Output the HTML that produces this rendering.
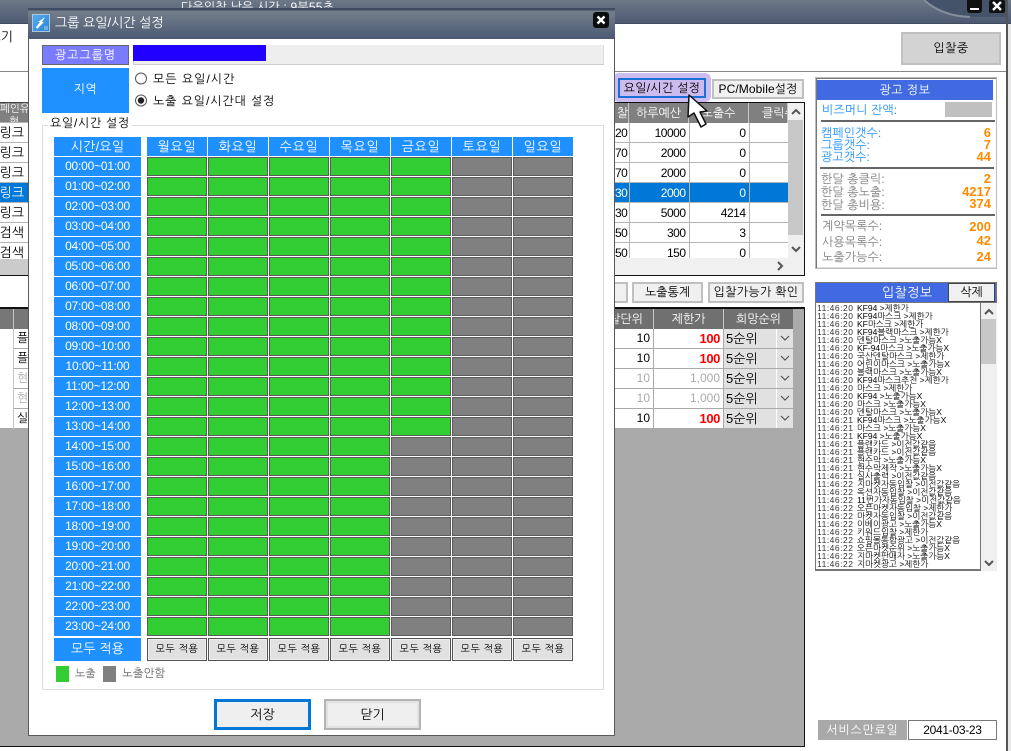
<!DOCTYPE html>
<html lang="ko">
<head>
<meta charset="utf-8">
<title>그룹 요일/시간 설정</title>
<style>
html,body{margin:0;padding:0;background:#fff}
body{position:relative;width:1011px;height:751px;overflow:hidden;font-family:"Liberation Sans","NanumGothic","Noto Sans CJK KR",sans-serif;font-size:12px;color:#000}
div,span,svg{box-sizing:border-box}
.a{position:absolute;white-space:nowrap}
.c{text-align:center}
.r{text-align:right}
.tm{left:54px;width:87px;height:19px;line-height:19px;background:#1e90ff;color:#fff;text-align:center;position:absolute;font-size:12px;letter-spacing:-.2px}
.day{top:137px;width:60px;height:19px;line-height:19px;background:#1e90ff;color:#fff;text-align:center;position:absolute;font-size:13px;letter-spacing:.7px}
.all{top:638px;width:60px;height:23px;line-height:21px;background:#e1e1e1;border:1px solid #555;box-shadow:inset 0 0 0 1px #eee;text-align:center;position:absolute;font-size:10px;letter-spacing:.5px}
.t td{padding:0 3px 0 0;text-align:right;border-right:1px solid #b4b4b4;border-bottom:1px solid #b4b4b4;height:19px;font-size:12px;letter-spacing:-.5px;overflow:hidden;white-space:nowrap}
.t{border-collapse:collapse;table-layout:fixed;position:absolute;background:#fff}
.hd{position:absolute;background:#808080;color:#fff;text-align:center;height:20px;line-height:20px;font-size:12px;border-right:1px solid #c8c8c8;overflow:hidden;white-space:nowrap}
.lnk{position:absolute;left:0;width:28px;height:19px;line-height:19px;background:#fff;font-size:13px;text-align:right;overflow:hidden;padding-right:4px;direction:rtl;white-space:nowrap}
.lab{position:absolute;white-space:nowrap;font-size:12px;letter-spacing:.1px}
.val{position:absolute;right:20px;color:#ff8c00;font-weight:bold;text-align:right;font-size:13px;white-space:nowrap}
.dv{position:absolute;background:#666;height:2px}
.dd{position:absolute;left:724px;width:69px;height:19px;background:#e1e1e1;font-size:13px;line-height:19px;padding-left:2px;overflow:hidden}
.dd i{position:absolute;left:52px;top:0;width:1px;height:19px;background:#fff}
.dd svg{position:absolute;left:56px;top:6px}
.log{position:absolute;left:817px;width:163px;height:8px;line-height:8px;font-size:8.5px;white-space:nowrap;overflow:hidden;color:#000}
.log b{font-weight:normal;display:inline-block;width:40px;letter-spacing:.5px;color:#333}
.btn{position:absolute;background:#f0f0f0;border:2px solid #c0c0c0;text-align:center;white-space:nowrap}
.big{color:#f00;font-weight:bold;font-size:13px;letter-spacing:-.4px}
</style>
</head>
<body>

<!-- main window title bar -->
<div class="a" style="left:0;top:0;width:1011px;height:24px;background:linear-gradient(#6d7887,#4c5a72);border-bottom:1px solid #3f4a5c"></div>
<svg class="a" style="left:900px;top:0" width="111" height="24"><path d="M24 0Q42 16 70 17L106 17L106 0Z" fill="#44526a"/><path d="M24 0Q42 16 70 17" fill="none" stroke="#858f9c" stroke-width="2"/></svg>
<div class="a" style="left:181px;top:0;color:#fff;font-size:12px;letter-spacing:.2px;line-height:14px">다음입찰 남은 시간 : 9분55초</div>
<div class="a" style="left:967px;top:0;width:15px;height:13px;background:#111;border-radius:0 0 3px 3px"><div class="a" style="left:3px;top:8px;width:9px;height:2px;background:#fff"></div></div>
<svg class="a" style="left:989px;top:0" width="16" height="13"><rect width="16" height="13" rx="2" fill="#111"/><path d="M4 2L12 10M12 2L4 10" stroke="#fff" stroke-width="2.4"/></svg>
<div class="a" style="left:1006px;top:0;width:2px;height:751px;background:#555"></div>
<div class="a" style="left:1008px;top:24px;width:3px;height:727px;background:#e8e8e8"></div>

<!-- toolbar -->
<div class="a" style="left:0;top:29px;font-size:13px;line-height:16px;width:13px;overflow:hidden;direction:rtl">보기</div>
<div class="a" style="left:0;top:71px;width:1006px;height:1px;background:#888"></div>
<div class="btn" style="left:901px;top:32px;width:100px;height:33px;background:#d3d3d3;line-height:29px;font-size:12px;letter-spacing:.5px">입찰중</div>

<!-- left upper table -->
<div class="a" style="left:0;top:102px;width:28px;height:21px;background:#808080;border-top:1px solid #444;color:#fff;font-size:10.5px;line-height:13px;overflow:hidden;text-align:center">페인유<br>형</div>
<div class="lnk" style="top:123px">파워링크</div>
<div class="lnk" style="top:143px">파워링크</div>
<div class="lnk" style="top:163px">파워링크</div>
<div class="lnk" style="top:183px;background:#0078d7;color:#fff">파워링크</div>
<div class="lnk" style="top:203px">파워링크</div>
<div class="lnk" style="top:223px">통합검색</div>
<div class="lnk" style="top:243px">통합검색</div>
<div class="a" style="left:0;top:122px;width:28px;height:137px;background:repeating-linear-gradient(#b4b4b4 0 1px,transparent 1px 20px)"></div>
<div class="a" style="left:0;top:259px;width:28px;height:16px;background:#cbcbcb"></div>
<div class="a" style="left:0;top:275px;width:28px;height:1px;background:#111"></div>

<!-- left lower table + background -->
<div class="a" style="left:0;top:307px;width:805px;height:440px;background:#aaa;border-top:2px solid #111;border-right:1px solid #111;border-bottom:1px solid #111"></div>
<div class="a" style="left:0;top:309px;width:28px;height:20px;background:#777"></div>
<div class="a" style="left:13px;top:309px;width:1px;height:120px;background:#c4c4c4"></div>
<div class="a" style="left:0;top:329px;width:13px;height:99px;background:#fff"></div>
<div class="a" style="left:14px;top:329px;width:14px;height:19px;background:#fff;line-height:19px;overflow:hidden;padding-left:3px">플</div>
<div class="a" style="left:14px;top:349px;width:14px;height:19px;background:#fff;line-height:19px;overflow:hidden;padding-left:3px">플</div>
<div class="a" style="left:14px;top:369px;width:14px;height:19px;background:#fff;line-height:19px;overflow:hidden;padding-left:3px;color:#aaa">현</div>
<div class="a" style="left:14px;top:389px;width:14px;height:19px;background:#fff;line-height:19px;overflow:hidden;padding-left:3px;color:#aaa">현</div>
<div class="a" style="left:14px;top:409px;width:14px;height:19px;background:#fff;line-height:19px;overflow:hidden;padding-left:3px">실</div>

<!-- right upper table -->
<div class="a" style="left:614px;top:102px;width:191px;height:174px;border:1px solid #111;background:#f0f0f0;overflow:hidden"></div>
<div class="hd" style="left:615px;top:103px;width:14px;text-align:left;padding-left:2px">찰</div>
<div class="hd" style="left:629px;top:103px;width:60px">하루예산</div>
<div class="hd" style="left:689px;top:103px;width:60px">노출수</div>
<div class="hd" style="left:749px;top:103px;width:39px;text-align:left;padding-left:13px">클릭수</div>
<div class="a" style="left:615px;top:123px;width:173px;height:135px;overflow:hidden;background:#fff">
<table class="t" style="left:0;top:0;width:173px">
<colgroup><col style="width:14px"><col style="width:60px"><col style="width:60px"><col style="width:39px"></colgroup>
<tr><td>20</td><td>10000</td><td>0</td><td></td></tr>
<tr><td>70</td><td>2000</td><td>0</td><td></td></tr>
<tr><td>70</td><td>2000</td><td>0</td><td></td></tr>
<tr style="background:#0078d7;color:#fff"><td>30</td><td>2000</td><td>0</td><td></td></tr>
<tr><td>30</td><td>5000</td><td>4214</td><td></td></tr>
<tr><td>50</td><td>300</td><td>3</td><td></td></tr>
<tr><td>50</td><td>150</td><td>0</td><td></td></tr>
</table>
</div>
<div class="a" style="left:788px;top:120px;width:15px;height:115px;background:#c8c8c8"></div>
<svg class="a" style="left:788px;top:103px" width="16" height="156"><path d="M4 11L8 7L12 11" fill="none" stroke="#555" stroke-width="2"/><path d="M4 144L8 148L12 144" fill="none" stroke="#555" stroke-width="2"/></svg>
<svg class="a" style="left:775px;top:260px" width="10" height="12"><path d="M3 2L7 6L3 10" fill="none" stroke="#555" stroke-width="2"/></svg>

<!-- middle buttons -->
<div class="btn" style="left:600px;top:282px;width:28px;height:21px"></div>
<div class="btn" style="left:632px;top:282px;width:71px;height:21px;line-height:17px">노출통계</div>
<div class="btn" style="left:708px;top:282px;width:96px;height:21px;line-height:17px;letter-spacing:.3px">입찰가능가 확인</div>

<!-- right lower table -->
<div class="hd" style="left:615px;top:309px;width:39px;background:#707070;text-align:right;padding-right:10px;direction:rtl">입찰단위</div>
<div class="hd" style="left:654px;top:309px;width:70px;background:#707070">제한가</div>
<div class="hd" style="left:724px;top:309px;width:69px;background:#707070;border-right:0">희망순위</div>

<div class="a r" style="left:615px;top:329px;width:38px;height:19px;background:#fff;line-height:19px;padding-right:3px">10</div>
<div class="a r big" style="left:654px;top:329px;width:69px;height:19px;background:#fff;line-height:19px;padding-right:3px">100</div>
<div class="dd" style="top:329px">5순위<i></i><svg width="10" height="7"><path d="M1 1L5 5L9 1" fill="none" stroke="#555" stroke-width="1.2"/></svg></div>

<div class="a r" style="left:615px;top:349px;width:38px;height:19px;background:#fff;line-height:19px;padding-right:3px">10</div>
<div class="a r big" style="left:654px;top:349px;width:69px;height:19px;background:#fff;line-height:19px;padding-right:3px">100</div>
<div class="dd" style="top:349px">5순위<i></i><svg width="10" height="7"><path d="M1 1L5 5L9 1" fill="none" stroke="#555" stroke-width="1.2"/></svg></div>

<div class="a r" style="left:615px;top:369px;width:38px;height:19px;background:#fff;line-height:19px;padding-right:3px;color:#aaa">10</div>
<div class="a r" style="left:654px;top:369px;width:69px;height:19px;background:#fff;line-height:19px;padding-right:3px;color:#aaa">1,000</div>
<div class="dd" style="top:369px">5순위<i></i><svg width="10" height="7"><path d="M1 1L5 5L9 1" fill="none" stroke="#555" stroke-width="1.2"/></svg></div>

<div class="a r" style="left:615px;top:389px;width:38px;height:19px;background:#fff;line-height:19px;padding-right:3px;color:#aaa">10</div>
<div class="a r" style="left:654px;top:389px;width:69px;height:19px;background:#fff;line-height:19px;padding-right:3px;color:#aaa">1,000</div>
<div class="dd" style="top:389px">5순위<i></i><svg width="10" height="7"><path d="M1 1L5 5L9 1" fill="none" stroke="#555" stroke-width="1.2"/></svg></div>

<div class="a r" style="left:615px;top:409px;width:38px;height:19px;background:#fff;line-height:19px;padding-right:3px">10</div>
<div class="a r big" style="left:654px;top:409px;width:69px;height:19px;background:#fff;line-height:19px;padding-right:3px">100</div>
<div class="dd" style="top:409px">5순위<i></i><svg width="10" height="7"><path d="M1 1L5 5L9 1" fill="none" stroke="#555" stroke-width="1.2"/></svg></div>

<!-- highlighted buttons -->
<div class="a" style="left:613px;top:73px;width:98px;height:29px;background:#cdbcf0;border-radius:6px"></div>
<div class="a c" style="left:618px;top:78px;width:88px;height:20px;background:#ccbbee;border:2px solid #1a6fd8;line-height:16px;font-size:12px;letter-spacing:.3px">요일/시간 설정</div>
<div class="btn" style="left:712px;top:79px;width:92px;height:20px;line-height:16px;letter-spacing:.1px">PC/Mobile설정</div>
<svg class="a" style="left:684px;top:91px" width="28" height="40"><path d="M5 4L4 26L10 22L17 36L22 33L16 21L23 20Z" fill="#fff" stroke="#111" stroke-width="1.5" stroke-linejoin="round"/></svg>

<!-- info panel -->
<div class="a" style="left:815px;top:77px;width:182px;height:192px;background:#fff;border:1px solid #bbb;box-shadow:inset 1px 1px 0 #777,inset 0 -1px 0 #ddd"></div>
<div class="a c" style="left:817px;top:80px;width:176px;height:20px;background:#4169e1;color:#fff;line-height:20px;letter-spacing:.5px">광고 정보</div>
<div class="lab" style="left:822px;top:103px;color:#1e90ff">비즈머니 잔액:</div>
<div class="a" style="left:945px;top:102px;width:47px;height:15px;background:#c0c0c0"></div>
<div class="dv" style="left:821px;top:120px;width:174px"></div>
<div class="lab" style="left:821px;top:126px;color:#1e90ff">캠페인갯수:</div>
<div class="lab" style="left:821px;top:138px;color:#1e90ff">그룹갯수:</div>
<div class="lab" style="left:821px;top:150px;color:#1e90ff">광고갯수:</div>
<div class="val" style="top:125px">6</div>
<div class="val" style="top:137px">7</div>
<div class="val" style="top:149px">44</div>
<div class="dv" style="left:820px;top:167px;width:174px"></div>
<div class="lab" style="left:821px;top:172px;color:#808080">한달 총클릭:</div>
<div class="lab" style="left:821px;top:185px;color:#808080">한달 총노출:</div>
<div class="lab" style="left:821px;top:198px;color:#808080">한달 총비용:</div>
<div class="val" style="top:171px">2</div>
<div class="val" style="top:184px">4217</div>
<div class="val" style="top:196px">374</div>
<div class="dv" style="left:821px;top:214px;width:174px"></div>
<div class="lab" style="left:822px;top:219px;color:#808080">계약목록수:</div>
<div class="lab" style="left:822px;top:235px;color:#808080">사용목록수:</div>
<div class="lab" style="left:822px;top:250px;color:#808080">노출가능수:</div>
<div class="val" style="top:219px">200</div>
<div class="val" style="top:233px">42</div>
<div class="val" style="top:249px">24</div>

<!-- bid info panel -->
<div class="a" style="left:815px;top:282px;width:182px;height:21px;background:#4169e1;border:1px solid #777"></div>
<div class="a" style="left:882px;top:283px;height:19px;color:#fff;line-height:19px;font-size:13px;letter-spacing:.4px">입찰정보</div>
<div class="a c" style="left:948px;top:283px;width:47px;height:19px;background:#f0f0f0;border:1px solid #444;line-height:17px">삭제</div>
<div class="a" style="left:815px;top:303px;width:166px;height:268px;background:#fff;border:1px solid #777;border-top:0;border-bottom:2px solid #777"></div>
<div class="a" style="left:981px;top:303px;width:16px;height:268px;background:#f0f0f0"></div>
<div class="a" style="left:981px;top:319px;width:15px;height:45px;background:#c8c8c8"></div>
<svg class="a" style="left:981px;top:303px" width="16" height="268"><path d="M4 11L8 7L12 11" fill="none" stroke="#555" stroke-width="2"/><path d="M4 258L8 262L12 258" fill="none" stroke="#555" stroke-width="2"/></svg>

<div class="log" style="top:304px"><b>11:46:20</b>KF94 &gt;제한가</div>
<div class="log" style="top:312px"><b>11:46:20</b>KF94마스크 &gt;제한가</div>
<div class="log" style="top:320px"><b>11:46:20</b>KF마스크 &gt;제한가</div>
<div class="log" style="top:328px"><b>11:46:20</b>KF94블랙마스크 &gt;제한가</div>
<div class="log" style="top:336px"><b>11:46:20</b>덴탈마스크 &gt;노출가능X</div>
<div class="log" style="top:344px"><b>11:46:20</b>KF-94마스크 &gt;노출가능X</div>
<div class="log" style="top:352px"><b>11:46:20</b>국산덴탈마스크 &gt;제한가</div>
<div class="log" style="top:360px"><b>11:46:20</b>어린이마스크 &gt;노출가능X</div>
<div class="log" style="top:368px"><b>11:46:20</b>블랙마스크 &gt;노출가능X</div>
<div class="log" style="top:376px"><b>11:46:20</b>KF94마스크추천 &gt;제한가</div>
<div class="log" style="top:384px"><b>11:46:20</b>마스크 &gt;제한가</div>
<div class="log" style="top:392px"><b>11:46:20</b>KF94 &gt;노출가능X</div>
<div class="log" style="top:400px"><b>11:46:20</b>마스크 &gt;노출가능X</div>
<div class="log" style="top:408px"><b>11:46:20</b>덴탈마스크 &gt;노출가능X</div>
<div class="log" style="top:416px"><b>11:46:21</b>KF94마스크 &gt;노출가능X</div>
<div class="log" style="top:424px"><b>11:46:21</b>마스크 &gt;노출가능X</div>
<div class="log" style="top:432px"><b>11:46:21</b>KF94 &gt;노출가능X</div>
<div class="log" style="top:440px"><b>11:46:21</b>플랜카드 &gt;이전값같음</div>
<div class="log" style="top:448px"><b>11:46:21</b>플랜카드 &gt;이전값같음</div>
<div class="log" style="top:456px"><b>11:46:21</b>현수막 &gt;노출가능X</div>
<div class="log" style="top:464px"><b>11:46:21</b>현수막제작 &gt;노출가능X</div>
<div class="log" style="top:472px"><b>11:46:21</b>실사출력 &gt;이전값같음</div>
<div class="log" style="top:480px"><b>11:46:22</b>지마켓자동입찰 &gt;이전값같음</div>
<div class="log" style="top:488px"><b>11:46:22</b>옥션자동입찰 &gt;이전값같음</div>
<div class="log" style="top:496px"><b>11:46:22</b>11번가자동입찰 &gt;이전값같음</div>
<div class="log" style="top:504px"><b>11:46:22</b>오픈마켓자동입찰 &gt;제한가</div>
<div class="log" style="top:512px"><b>11:46:22</b>마켓자동입찰 &gt;이전값같음</div>
<div class="log" style="top:520px"><b>11:46:22</b>이베이광고 &gt;노출가능X</div>
<div class="log" style="top:528px"><b>11:46:22</b>키워드입찰 &gt;제한가</div>
<div class="log" style="top:536px"><b>11:46:22</b>쇼핑몰통합광고 &gt;이전값같음</div>
<div class="log" style="top:544px"><b>11:46:22</b>오픈마켓순위 &gt;노출가능X</div>
<div class="log" style="top:552px"><b>11:46:22</b>지마켓판매자 &gt;노출가능X</div>
<div class="log" style="top:560px"><b>11:46:22</b>지마켓광고 &gt;제한가</div>

<div class="a c" style="left:818px;top:720px;width:89px;height:20px;background:#a9a9a9;color:#fff;line-height:20px;letter-spacing:.7px">서비스만료일</div>
<div class="a c" style="left:908px;top:720px;width:89px;height:20px;background:#fff;border:1px solid #777;line-height:18px;letter-spacing:-.3px">2041-03-23</div>

<!-- dialog -->
<div class="a" style="left:28px;top:8px;width:587px;height:728px;background:#fff;border:1px solid #5a5a5a;border-top:0"></div>
<div class="a" style="left:28px;top:8px;width:587px;height:31px;background:linear-gradient(#3f4c62 0,#3f4c62 2px,#747f8c 3px,#4b5a73 100%)"></div>
<svg class="a" style="left:32px;top:14px" width="18" height="18"><defs><linearGradient id="ic" x1="0" y1="0" x2="1" y2="1"><stop offset="0" stop-color="#57b0ee"/><stop offset="1" stop-color="#2b7fd0"/></linearGradient></defs><rect width="18" height="18" fill="url(#ic)"/><rect x=".5" y=".5" width="17" height="17" fill="none" stroke="#a8c8e0"/><path d="M4 13L8 8L6 8L13 3L10 8L12 8L5 15Z" fill="#fff"/><rect x="12" y="12" width="4" height="4" fill="#6fb0e8"/></svg>
<div class="a" style="left:55px;top:15px;color:#fff;font-size:13px;line-height:16px">그룹 요일/시간 설정</div>
<svg class="a" style="left:593px;top:12px" width="16" height="16"><rect width="16" height="16" rx="3" fill="#0d0d0d"/><path d="M4.5 4.5L11.5 11.5M11.5 4.5L4.5 11.5" stroke="#fff" stroke-width="2.4"/></svg>

<div class="a c" style="left:42px;top:45px;width:87px;height:20px;background:#7b7bff;border:1px solid #666;color:#fff;line-height:18px;font-size:12px;letter-spacing:.95px">광고그룹명</div>
<div class="a" style="left:133px;top:45px;width:471px;height:20px;background:#eee;border:1px solid #ccc;border-top:0;border-right:1px solid #ddd"></div>
<div class="a" style="left:133px;top:45px;width:133px;height:16px;background:#2200ff"></div>
<div class="a c" style="left:42px;top:68px;width:87px;height:45px;background:#1e90ff;color:#fff;line-height:43px;font-size:12px;letter-spacing:.5px">지역</div>

<svg class="a" style="left:134px;top:71px" width="14" height="36"><circle cx="7" cy="7.5" r="5.5" fill="#fff" stroke="#555"/><circle cx="7" cy="29.5" r="5.5" fill="#fff" stroke="#555"/><circle cx="7" cy="29.5" r="3.2" fill="#222"/></svg>
<div class="a" style="left:153px;top:71px;line-height:16px;font-size:12px;letter-spacing:1px">모든 요일/시간</div>
<div class="a" style="left:153px;top:93px;line-height:16px;font-size:12px;letter-spacing:.9px">노출 요일/시간대 설정</div>

<div class="a" style="left:42px;top:125px;width:562px;height:565px;border:1px solid #ddd"></div>
<div class="a" style="left:48px;top:115px;background:#fff;padding:0 2px;line-height:16px;font-size:12px;letter-spacing:.7px">요일/시간 설정</div>

<div class="tm" style="top:137px;font-size:13px;letter-spacing:.2px">시간/요일</div>
<div class="day" style="left:147px">월요일</div>
<div class="day" style="left:208px">화요일</div>
<div class="day" style="left:269px">수요일</div>
<div class="day" style="left:330px">목요일</div>
<div class="day" style="left:391px">금요일</div>
<div class="day" style="left:452px">토요일</div>
<div class="day" style="left:513px">일요일</div>

<div class="tm" style="top:157px">00:00~01:00</div>
<div class="tm" style="top:177px">01:00~02:00</div>
<div class="tm" style="top:197px">02:00~03:00</div>
<div class="tm" style="top:217px">03:00~04:00</div>
<div class="tm" style="top:237px">04:00~05:00</div>
<div class="tm" style="top:257px">05:00~06:00</div>
<div class="tm" style="top:277px">06:00~07:00</div>
<div class="tm" style="top:297px">07:00~08:00</div>
<div class="tm" style="top:317px">08:00~09:00</div>
<div class="tm" style="top:337px">09:00~10:00</div>
<div class="tm" style="top:357px">10:00~11:00</div>
<div class="tm" style="top:377px">11:00~12:00</div>
<div class="tm" style="top:397px">12:00~13:00</div>
<div class="tm" style="top:417px">13:00~14:00</div>
<div class="tm" style="top:437px">14:00~15:00</div>
<div class="tm" style="top:457px">15:00~16:00</div>
<div class="tm" style="top:477px">16:00~17:00</div>
<div class="tm" style="top:497px">17:00~18:00</div>
<div class="tm" style="top:517px">18:00~19:00</div>
<div class="tm" style="top:537px">19:00~20:00</div>
<div class="tm" style="top:557px">20:00~21:00</div>
<div class="tm" style="top:577px">21:00~22:00</div>
<div class="tm" style="top:597px">22:00~23:00</div>
<div class="tm" style="top:617px">23:00~24:00</div>

<svg class="a" style="left:0;top:0" width="1011" height="751">
<defs>
<pattern id="g" patternUnits="userSpaceOnUse" x="147" y="157" width="61" height="20"><rect x=".5" y=".5" width="59" height="18" fill="#32cd32" stroke="#5c5c5c"/></pattern>
<pattern id="n" patternUnits="userSpaceOnUse" x="147" y="157" width="61" height="20"><rect x=".5" y=".5" width="59" height="18" fill="#808080" stroke="#5c5c5c"/></pattern>
</defs>
<rect x="147" y="157" width="244" height="480" fill="url(#g)"/>
<rect x="391" y="157" width="61" height="280" fill="url(#g)"/>
<rect x="391" y="437" width="61" height="200" fill="url(#n)"/>
<rect x="452" y="157" width="122" height="480" fill="url(#n)"/>
</svg>

<div class="a c" style="left:54px;top:638px;width:87px;height:23px;background:#1e90ff;color:#fff;line-height:22px;font-size:13px;letter-spacing:.1px">모두 적용</div>
<div class="all" style="left:147px">모두 적용</div>
<div class="all" style="left:208px">모두 적용</div>
<div class="all" style="left:269px">모두 적용</div>
<div class="all" style="left:330px">모두 적용</div>
<div class="all" style="left:391px">모두 적용</div>
<div class="all" style="left:452px">모두 적용</div>
<div class="all" style="left:513px">모두 적용</div>

<div class="a" style="left:56px;top:666px;width:13px;height:16px;background:#32cd32"></div>
<div class="a" style="left:75px;top:666px;line-height:16px;font-size:11px;color:#666">노출</div>
<div class="a" style="left:103px;top:666px;width:13px;height:16px;background:#808080"></div>
<div class="a" style="left:122px;top:666px;line-height:16px;font-size:11.5px;color:#666">노출안함</div>

<div class="a c" style="left:214px;top:699px;width:97px;height:31px;background:#efefef;border:3px solid #0078d7;line-height:25px;font-size:13px">저장</div>
<div class="a c" style="left:324px;top:699px;width:97px;height:31px;background:#efefef;border:2px solid #b4b4b4;box-shadow:inset 0 0 0 2px #e2e2e2;line-height:27px;font-size:13px">닫기</div>

</body>
</html>
